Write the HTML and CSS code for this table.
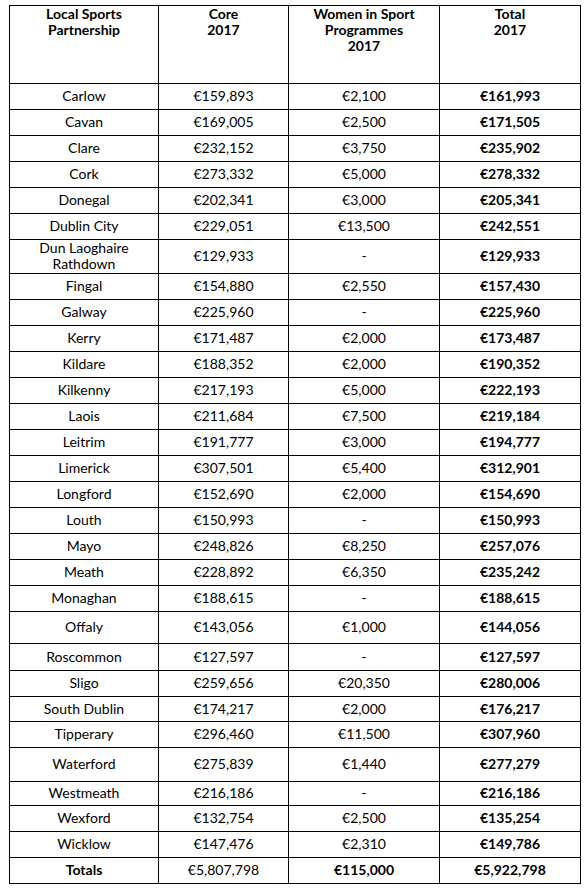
FILE: index.html
```html
<!DOCTYPE html>
<html>
<head>
<meta charset="utf-8">
<link rel="stylesheet" href="styles.css">
</head>
<body>
<table class="grant">
  <colgroup>
    <col class="c1"><col class="c2"><col class="c3"><col class="c4">
  </colgroup>
  <thead>
    <tr class="head">
      <th>Local Sports<br>Partnership</th>
      <th>Core<br>2017</th>
      <th>Women in Sport<br>Programmes<br>2017</th>
      <th>Total<br>2017</th>
    </tr>
  </thead>
  <tbody>
    <tr><td>Carlow</td><td>€159,893</td><td>€2,100</td><td class="b">€161,993</td></tr>
    <tr><td>Cavan</td><td>€169,005</td><td>€2,500</td><td class="b">€171,505</td></tr>
    <tr><td>Clare</td><td>€232,152</td><td>€3,750</td><td class="b">€235,902</td></tr>
    <tr><td>Cork</td><td>€273,332</td><td>€5,000</td><td class="b">€278,332</td></tr>
    <tr><td>Donegal</td><td>€202,341</td><td>€3,000</td><td class="b">€205,341</td></tr>
    <tr><td>Dublin City</td><td>€229,051</td><td>€13,500</td><td class="b">€242,551</td></tr>
    <tr class="h33"><td>Dun Laoghaire<br>Rathdown</td><td>€129,933</td><td>-</td><td class="b">€129,933</td></tr>
    <tr><td>Fingal</td><td>€154,880</td><td>€2,550</td><td class="b">€157,430</td></tr>
    <tr><td>Galway</td><td>€225,960</td><td>-</td><td class="b">€225,960</td></tr>
    <tr><td>Kerry</td><td>€171,487</td><td>€2,000</td><td class="b">€173,487</td></tr>
    <tr><td>Kildare</td><td>€188,352</td><td>€2,000</td><td class="b">€190,352</td></tr>
    <tr><td>Kilkenny</td><td>€217,193</td><td>€5,000</td><td class="b">€222,193</td></tr>
    <tr><td>Laois</td><td>€211,684</td><td>€7,500</td><td class="b">€219,184</td></tr>
    <tr><td>Leitrim</td><td>€191,777</td><td>€3,000</td><td class="b">€194,777</td></tr>
    <tr><td>Limerick</td><td>€307,501</td><td>€5,400</td><td class="b">€312,901</td></tr>
    <tr><td>Longford</td><td>€152,690</td><td>€2,000</td><td class="b">€154,690</td></tr>
    <tr><td>Louth</td><td>€150,993</td><td>-</td><td class="b">€150,993</td></tr>
    <tr><td>Mayo</td><td>€248,826</td><td>€8,250</td><td class="b">€257,076</td></tr>
    <tr><td>Meath</td><td>€228,892</td><td>€6,350</td><td class="b">€235,242</td></tr>
    <tr><td>Monaghan</td><td>€188,615</td><td>-</td><td class="b">€188,615</td></tr>
    <tr class="h32"><td>Offaly</td><td>€143,056</td><td>€1,000</td><td class="b">€144,056</td></tr>
    <tr class="h27"><td>Roscommon</td><td>€127,597</td><td>-</td><td class="b">€127,597</td></tr>
    <tr><td>Sligo</td><td>€259,656</td><td>€20,350</td><td class="b">€280,006</td></tr>
    <tr class="h25"><td>South Dublin</td><td>€174,217</td><td>€2,000</td><td class="b">€176,217</td></tr>
    <tr><td>Tipperary</td><td>€296,460</td><td>€11,500</td><td class="b">€307,960</td></tr>
    <tr class="h34"><td>Waterford</td><td>€275,839</td><td>€1,440</td><td class="b">€277,279</td></tr>
    <tr class="h24"><td>Westmeath</td><td>€216,186</td><td>-</td><td class="b">€216,186</td></tr>
    <tr><td>Wexford</td><td>€132,754</td><td>€2,500</td><td class="b">€135,254</td></tr>
    <tr><td>Wicklow</td><td>€147,476</td><td>€2,310</td><td class="b">€149,786</td></tr>
    <tr class="totals"><td class="b">Totals</td><td>€5,807,798</td><td class="b">€115,000</td><td class="b">€5,922,798</td></tr>
  </tbody>
</table>
</body>
</html>
```

FILE: styles.css
```css
html, body {
  margin: 0;
  padding: 0;
  background: #ffffff;
}

body {
  font-family: Lato, "Open Sans", "Liberation Sans", sans-serif;
  color: #000000;
}

.grant {
  margin: 5px 0 0 9px;
  border-collapse: collapse;
  table-layout: fixed;
  width: 571px;
  font-size: 14px;
}

.c1 { width: 149px; }
.c2 { width: 130px; }
.c3 { width: 151px; }
.c4 { width: 141px; }

.grant th,
.grant td {
  border: 1px solid #000000;
  text-align: center;
  padding: 0 2px;
  line-height: 16px;
}

.grant th {
  vertical-align: top;
  font-weight: 700;
  padding-top: 0;
}

.grant td {
  vertical-align: middle;
  font-weight: 400;
  padding-bottom: 1px;
}

.head { height: 78px; }
.grant tbody tr { height: 26px; }
.grant tbody tr.h33 { height: 33px; }
.grant tbody tr.h32 { height: 32px; }
.grant tbody tr.h27 { height: 27px; }
.grant tbody tr.h25 { height: 25px; }
.grant tbody tr.h34 { height: 34px; }
.grant tbody tr.h24 { height: 24px; }

.grant td.b { font-weight: 700; }
```
